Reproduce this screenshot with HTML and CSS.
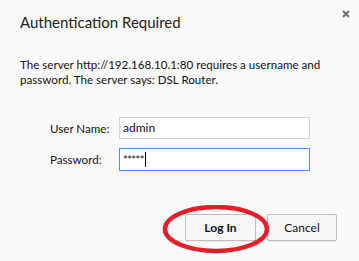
FILE: index.html
```html
<!DOCTYPE html>
<html>
<head>
<meta charset="utf-8">
<link rel="stylesheet" href="styles.css">
</head>
<body>
<div class="dialog">
  <div class="header">
    <h1 class="title">Authentication Required</h1>
    <button class="close" aria-label="Close">
      <svg width="8" height="8" viewBox="0 0 8 8"><path d="M1 1L7 7M7 1L1 7" stroke="#6f6f6f" stroke-width="2" fill="none"/></svg>
    </button>
  </div>
  <p class="message">The server http://192.168.10.1:80 requires a username and password. The server says: DSL Router.</p>
  <div class="form">
    <label class="label">User Name:</label>
    <div class="field">admin</div>
    <label class="label">Password:</label>
    <div class="field focused">*****<span class="caret"></span></div>
  </div>
  <div class="actions">
    <div class="login-wrap">
      <button class="btn primary">Log In</button>
      <svg class="circle" width="112" height="52" viewBox="0 0 112 52"><ellipse cx="54" cy="24" rx="51" ry="22" fill="none" stroke="#e61e2a" stroke-width="4.5"/></svg>
    </div>
    <button class="btn">Cancel</button>
  </div>
</div>
</body>
</html>
```
FILE: styles.css
```css
html, body {
  margin: 0;
  padding: 0;
  background: #fafafa;
}
body {
  width: 359px;
  height: 261px;
  overflow: hidden;
  font-family: "Lato", "Noto Sans", sans-serif;
  color: #111;
}
.dialog {
  padding: 0 22px 0 20px;
}
.header {
  display: flex;
  justify-content: space-between;
  align-items: flex-start;
  height: 57px;
}
.title {
  margin: 0;
  padding-top: 12px;
  font-size: 15px;
  font-weight: normal;
  line-height: 20px;
  color: #222;
}
.close {
  margin: 10px -13px 0 0;
  padding: 0;
  border: 0;
  background: none;
  width: 8px;
  height: 8px;
  display: flex;
}
.message {
  margin: 0;
  font-size: 11.6px;
  line-height: 15px;
  color: #111;
  padding-right: 0;
}
.form {
  margin: 30px 0 0 30px;
  display: grid;
  grid-template-columns: 69px 191px;
  row-gap: 9px;
  align-items: center;
  font-size: 11.6px;
}
.label {
  color: #111;
}
.field {
  height: 20px;
  border: 1px solid #d6d6d6;
  background: #fff;
  padding: 0 3px;
  line-height: 20px;
  display: flex;
  align-items: center;
  font-size: 12px;
}
.field.focused {
  border-color: #4d90fe;
  height: 21px;
  font-size: 11px;
  letter-spacing: -0.5px;
}
.caret {
  display: inline-block;
  width: 1px;
  height: 15px;
  background: #000;
  margin-left: 1px;
}
.actions {
  display: flex;
  justify-content: flex-end;
  gap: 11px;
  margin-top: 43px;
}
.login-wrap {
  position: relative;
}
.btn {
  width: 70px;
  height: 27px;
  border: 1px solid #bfbfbf;
  border-radius: 2px;
  background: #f7f7f7;
  font-family: "Lato", "Noto Sans", sans-serif;
  font-size: 12px;
  color: #111;
  box-shadow: 0 1px 0 rgba(0,0,0,0.06);
  padding: 0;
}
.btn.primary {
  width: 71px;
  font-weight: bold;
}
.circle {
  position: absolute;
  left: -23px;
  top: -9px;
  pointer-events: none;
}
```
